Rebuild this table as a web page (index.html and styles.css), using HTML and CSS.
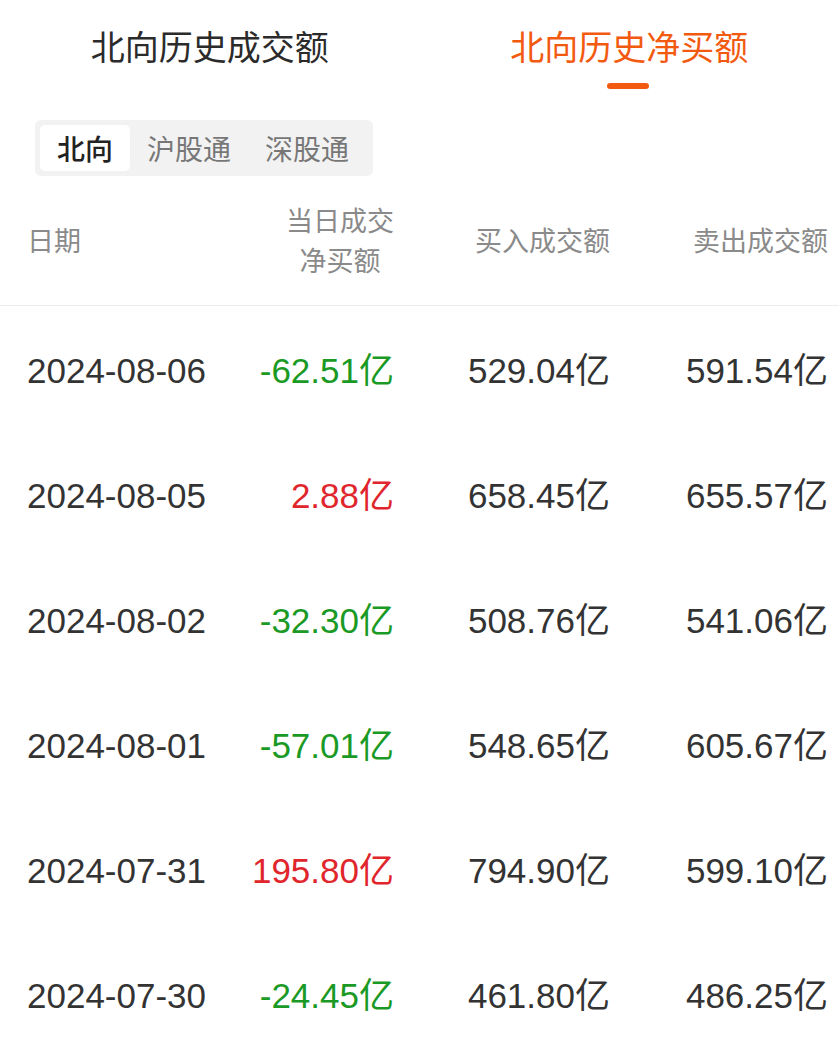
FILE: index.html
```html
<!DOCTYPE html>
<html lang="zh-CN">
<head>
  <meta charset="UTF-8" />
  <meta name="viewport" content="width=device-width, initial-scale=1.0"/>
  <title>北向历史净买额</title>
  <link rel="stylesheet" href="styles.css">
</head>
<body>
  <div class="tabs">
    <div class="tab">北向历史成交额</div>
    <div class="tab active">北向历史净买额</div>
  </div>

  <div class="segment">
    <div class="seg-item on">北向</div>
    <div class="seg-item">沪股通</div>
    <div class="seg-item">深股通</div>
  </div>

  <div class="table">
    <div class="row head">
      <div class="c date">日期</div>
      <div class="c net">当日成交<br>净买额</div>
      <div class="c num">买入成交额</div>
      <div class="c num">卖出成交额</div>
    </div>
    <div id="rows" class="rows"></div>
  </div>

  <script>
    const data = [
      ['2024-08-06', '-62.51', '529.04', '591.54'],
      ['2024-08-05', '2.88', '658.45', '655.57'],
      ['2024-08-02', '-32.30', '508.76', '541.06'],
      ['2024-08-01', '-57.01', '548.65', '605.67'],
      ['2024-07-31', '195.80', '794.90', '599.10'],
      ['2024-07-30', '-24.45', '461.80', '486.25']
    ];

    const box = document.getElementById('rows');
    data.forEach((d) => {
      const row = document.createElement('div');
      row.className = 'row';
      const cls = d[1].startsWith('-') ? 'down' : 'up';
      row.innerHTML = `
        <div class="c date">${d[0]}</div>
        <div class="c net ${cls}">${d[1]}亿</div>
        <div class="c num">${d[2]}亿</div>
        <div class="c num">${d[3]}亿</div>
      `;
      box.appendChild(row);
    });
  </script>
</body>
</html>
```

FILE: styles.css
```css
:root {
  --orange: #f25a10;
  --text: #333333;
  --grey: #8a8a8a;
  --green: #1a9a25;
  --red: #e0262c;
}

body {
  margin: 0;
  padding: 0;
  background: #ffffff;
  color: var(--text);
  font-family: "Liberation Sans", "Noto Sans CJK SC", sans-serif;
}

.tabs {
  display: grid;
  grid-template-columns: 1fr 1fr;
  height: 100px;
}

.tab {
  text-align: center;
  font-family: "Noto Sans CJK SC", sans-serif;
  font-size: 34px;
  line-height: 44px;
  padding-top: 24px;
  color: #2b2b2b;
  position: relative;
}

.tab.active {
  color: var(--orange);
}

.tab.active::after {
  content: "";
  position: absolute;
  left: 50%;
  top: 83px;
  width: 42px;
  height: 6px;
  margin-left: -22px;
  border-radius: 3px;
  background: var(--orange);
}

.segment {
  display: flex;
  width: 328px;
  margin: 20px 0 0 35px;
  padding: 5px;
  background: #f2f2f2;
  border-radius: 6px;
}

.seg-item {
  font-family: "Noto Sans CJK SC", sans-serif;
  font-size: 28px;
  color: #777777;
  height: 46px;
  line-height: 46px;
  padding: 0 17px;
}

.seg-item.on {
  background: #ffffff;
  color: #222222;
  border-radius: 5px;
  font-weight: 500;
}

.table {
  margin-top: 19px;
}

.rows {
  padding-top: 2px;
}

.row {
  display: grid;
  grid-template-columns: 210px 157px 216px 218px;
  padding: 0 11px 0 27px;
  height: 125px;
  align-items: center;
  font-size: 35px;
  line-height: 44px;
}

.row.head {
  box-sizing: border-box;
  height: 111px;
  padding-bottom: 21px;
  border-bottom: 1px solid #ececec;
  font-family: "Noto Sans CJK SC", sans-serif;
  font-size: 27px;
  color: var(--grey);
  line-height: 40px;
}

.c.net, .c.num {
  justify-self: end;
  text-align: right;
}

.head .c.net {
  text-align: center;
}

.up {
  color: var(--red);
}

.down {
  color: var(--green);
}
```
